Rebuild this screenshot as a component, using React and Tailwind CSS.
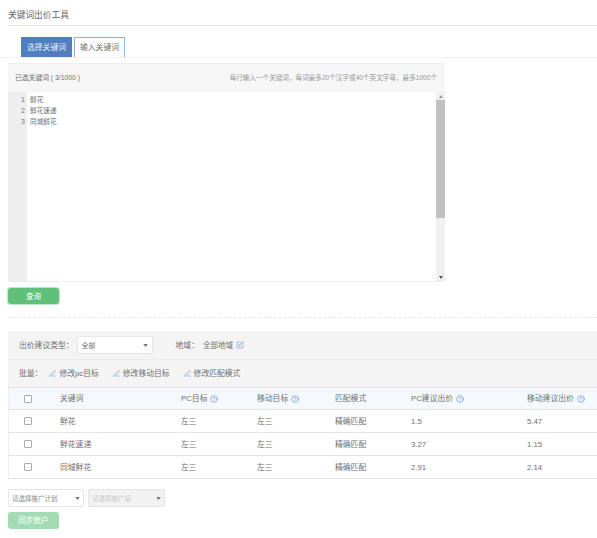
import React from 'react';
import { SquarePen, PenLine, CircleHelp } from 'lucide-react';

const rows = [
  { name: '鲜花', pc: '1.5', mobile: '5.47' },
  { name: '鲜花速递', pc: '3.27', mobile: '1.15' },
  { name: '同城鲜花', pc: '2.91', mobile: '2.14' },
];

const Caret = () => (
  <svg width="5" height="3" viewBox="0 0 6 4" className="shrink-0">
    <path d="M0 0h6L3 4z" fill="#777" />
  </svg>
);

const Help = () => <CircleHelp className="w-[8px] h-[8px] text-[#4f7fc0] ml-[3px] shrink-0" strokeWidth={1.6} />;

const Check = () => <div className="w-[8px] h-[8px] bg-white border border-[#aaa] rounded-[1px]" />;

const Action = ({ children }) => (
  <div className="flex items-center gap-[3px]">
    <PenLine className="w-[7px] h-[7px] text-[#4f7fc0]" strokeWidth={1.5} />
    <span>{children}</span>
  </div>
);

const Cols = ({ className, children }) => (
  <div className={`grid grid-cols-[51px_121px_76px_78px_76px_116px_70px] items-center ${className}`}>{children}</div>
);

export default function App() {
  return (
    <div className="w-[597px] h-[538px] bg-white overflow-hidden text-[7.8px] leading-[11px] text-[#707070]" style={{ fontFamily: '"Liberation Sans", "Noto Sans CJK SC", sans-serif' }}>
      {/* Title */}
      <div className="ml-[8px] h-[26px] border-b border-[#e8e8e8] pt-[9px] text-[8.7px] leading-[12px] text-[#666]">关键词出价工具</div>

      {/* Tabs */}
      <div className="flex gap-[2px] pl-[21px] pt-[11px] border-b border-[#f0f0f0]">
        <div className="w-[51px] h-[20px] bg-[#4f7fc0] text-[#e8eef7] flex items-center justify-center">选择关键词</div>
        <div className="w-[51px] h-[20px] bg-white border border-b-0 border-[#8fb0dc] flex items-center justify-center">输入关键词</div>
      </div>

      {/* Keyword editor */}
      <div className="ml-[8px] mt-[5px] w-[437px] h-[219px] border-b border-[#eee] flex flex-col">
        <div className="h-[29px] shrink-0 bg-[#f6f6f6] pl-[7px] pr-[8px] pb-[1px] flex items-center justify-between border-t border-[#efefef]">
          <span className="text-[6.8px]">已选关键词 ( 3/1000 )</span>
          <span className="text-[6.6px] text-[#999]">每行输入一个关键词，每词最多20个汉字或40个英文字母，最多1000个</span>
        </div>
        <div className="flex-1 flex min-h-0">
          <div className="w-[19px] bg-[#eeeeee] pt-[2px] pr-[2px] text-right text-[7px] text-[#777]">
            <div className="h-[11px]">1</div>
            <div className="h-[11px]">2</div>
            <div className="h-[11px]">3</div>
          </div>
          <div className="flex-1 pt-[2px] pl-[3px] text-[6.7px] text-[#707070]">
            <div className="h-[11px]">鲜花</div>
            <div className="h-[11px]">鲜花速递</div>
            <div className="h-[11px]">同城鲜花</div>
          </div>
          <div className="w-[9px] bg-[#f1f1f1] flex flex-col items-center">
            <div className="h-[8px] flex items-center">
              <svg width="4" height="3" viewBox="0 0 4 3"><path d="M0 3h4L2 0z" fill="#999" /></svg>
            </div>
            <div className="w-full h-[118px] bg-[#c1c1c1]" />
            <div className="flex-1" />
            <div className="h-[8px] flex items-center">
              <svg width="4" height="3" viewBox="0 0 4 3"><path d="M0 0h4L2 3z" fill="#555" /></svg>
            </div>
          </div>
        </div>
      </div>

      {/* Query */}
      <div className="ml-[8px] mt-[6px] w-[51px] h-[16px] rounded-[3px] bg-[#60c079] ring-1 ring-[#bfe8ca] text-[7.5px] text-white flex items-center justify-center">查询</div>

      <div className="ml-[8px] mt-[13px] border-t border-dashed border-[#e8e8e8]" />

      {/* Filters */}
      <div className="ml-[8px] mt-[13px] bg-[#f4f4f4]">
        <div className="h-[29px] pl-[11px] flex items-center border-b border-[#ebebeb]">
          <span>出价建议类型：</span>
          <div className="ml-[3px] w-[76px] h-[18px] bg-white border border-[#e5e5e5] rounded-[2px] pl-[4px] pr-[4px] flex items-center justify-between">
            <span className="text-[7px]">全部</span>
            <Caret />
          </div>
          <span className="ml-[23px]">地域：</span>
          <span className="ml-[4px] text-[7.5px]">全部地域</span>
          <SquarePen className="w-[8px] h-[8px] ml-[3px] text-[#4f7fc0]" strokeWidth={1.5} />
        </div>
        <div className="h-[27px] pl-[11px] flex items-center">
          <span className="mr-[7px]">批量：</span>
          <Action>修改pc目标</Action>
          <div className="w-[14px]" />
          <Action>修改移动目标</Action>
          <div className="w-[14px]" />
          <Action>修改匹配模式</Action>
        </div>
      </div>

      {/* Table */}
      <div className="ml-[8px] border-l border-[#eee]">
        <Cols className="h-[23px] bg-[#f5f8fc] border-y border-[#e2e2e2]">
          <div className="pl-[15px]"><Check /></div>
          <div>关键词</div>
          <div className="flex items-center">PC目标<Help /></div>
          <div className="flex items-center">移动目标<Help /></div>
          <div>匹配模式</div>
          <div className="flex items-center">PC建议出价<Help /></div>
          <div className="flex items-center">移动建议出价<Help /></div>
        </Cols>
        {rows.map((row) => (
          <Cols key={row.name} className="h-[23px] border-b border-[#e4e4e4]">
            <div className="pl-[15px]"><Check /></div>
            <div>{row.name}</div>
            <div>左三</div>
            <div>左三</div>
            <div>精确匹配</div>
            <div>{row.pc}</div>
            <div>{row.mobile}</div>
          </Cols>
        ))}
      </div>

      {/* Plan selects */}
      <div className="ml-[8px] mt-[10px] flex gap-[4px]">
        <div className="w-[76px] h-[18px] bg-white border border-[#e5e5e5] rounded-[2px] pl-[3px] pr-[3px] flex items-center justify-between">
          <span className="text-[6.5px] text-[#888]">请选择推广计划</span>
          <Caret />
        </div>
        <div className="w-[77px] h-[18px] bg-[#f2f2f2] border border-[#e5e5e5] rounded-[2px] pl-[3px] pr-[3px] flex items-center justify-between">
          <span className="text-[6.5px] text-[#c8c8c8]">请选择推广组</span>
          <Caret />
        </div>
      </div>

      <div className="ml-[8px] mt-[5px] w-[51px] h-[17px] rounded-[3px] bg-[#a3dcb2] text-[7.5px] text-white flex items-center justify-center">同步账户</div>
    </div>
  );
}
